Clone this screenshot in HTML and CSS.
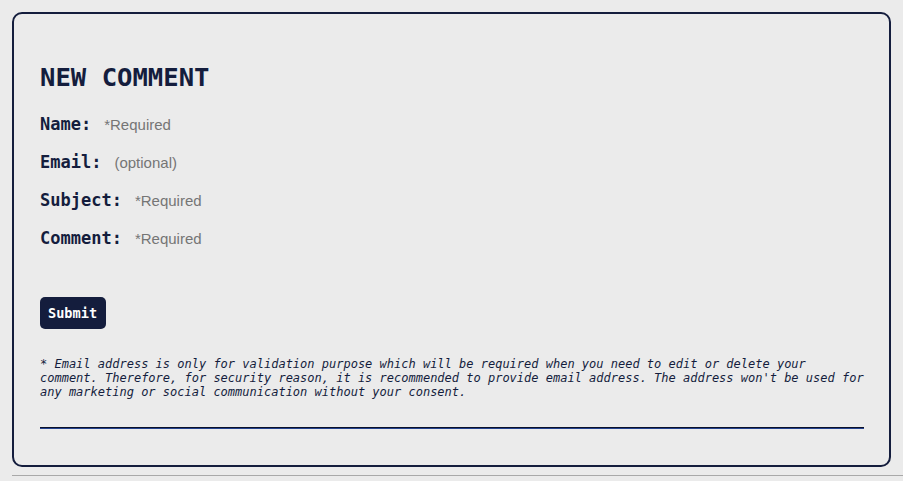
FILE: index.html
```html
<!DOCTYPE html>
<html lang="en">
<head>
<meta charset="utf-8">
<title>New Comment</title>
<link rel="stylesheet" href="styles.css">
</head>
<body>
<div class="page">
  <form class="card">
    <h2 class="title">NEW COMMENT</h2>
    <div class="fields">
      <div class="row"><label class="label" for="name">Name:</label><input class="input" id="name" type="text" placeholder="*Required"></div>
      <div class="row"><label class="label" for="email">Email:</label><input class="input" id="email" type="text" placeholder="(optional)"></div>
      <div class="row"><label class="label" for="subject">Subject:</label><input class="input" id="subject" type="text" placeholder="*Required"></div>
      <div class="row"><label class="label" for="comment">Comment:</label><input class="input" id="comment" type="text" placeholder="*Required"></div>
    </div>
    <button class="submit" type="button">Submit</button>
    <p class="note">* Email address is only for validation purpose which will be required when you need to edit or delete your comment. Therefore, for security reason, it is recommended to provide email address. The address won't be used for any marketing or social communication without your consent.</p>
    <div class="divider"></div>
  </form>
  <div class="rule"></div>
</div>
</body>
</html>
```

FILE: styles.css
```css
html, body {
  margin: 0;
  padding: 0;
  background: #ebebeb;
}

.page {
  padding: 12px 0 0 12px;
}

.card {
  box-sizing: border-box;
  width: 879px;
  margin: 0;
  border: 2px solid #141d3d;
  border-radius: 10px;
  padding: 48px 25px 36px 26px;
  display: flex;
  flex-direction: column;
  align-items: flex-start;
  color: #141d3d;
  font-family: "DejaVu Sans Mono", monospace;
}

.title {
  margin: 0;
  font-size: 25.6px;
  line-height: 30px;
  font-weight: bold;
}

.fields {
  margin-top: 13px;
  display: flex;
  flex-direction: column;
}

.row {
  display: flex;
  align-items: baseline;
  height: 38px;
  line-height: 38px;
  gap: 12px;
}

.label {
  font-size: 17px;
  font-weight: bold;
}

.input {
  border: none;
  background: transparent;
  padding: 0 0 0 1px;
  margin: 0;
  outline: none;
  width: 300px;
  font-family: "Liberation Sans", Arial, sans-serif;
  font-size: 15px;
  color: #141d3d;
}

.input::placeholder {
  color: #757575;
}

.submit {
  margin-top: 40px;
  height: 32px;
  padding: 0 9px 0 8px;
  border: none;
  border-radius: 5px;
  background: #141d3d;
  color: #ffffff;
  font-family: "DejaVu Sans Mono", monospace;
  font-weight: bold;
  font-size: 13.6px;
  cursor: pointer;
}

.note {
  margin: 28px 0 0 0;
  font-size: 12px;
  line-height: 14px;
  font-style: italic;
  color: #141d3d;
}

.divider {
  align-self: stretch;
  margin-top: 28px;
  height: 0;
  border-top: 1px solid #0b1128;
  border-bottom: 1px solid #24428f;
}

.rule {
  margin-top: 8px;
  border-top: 1px solid #a9a9a9;
}
```
